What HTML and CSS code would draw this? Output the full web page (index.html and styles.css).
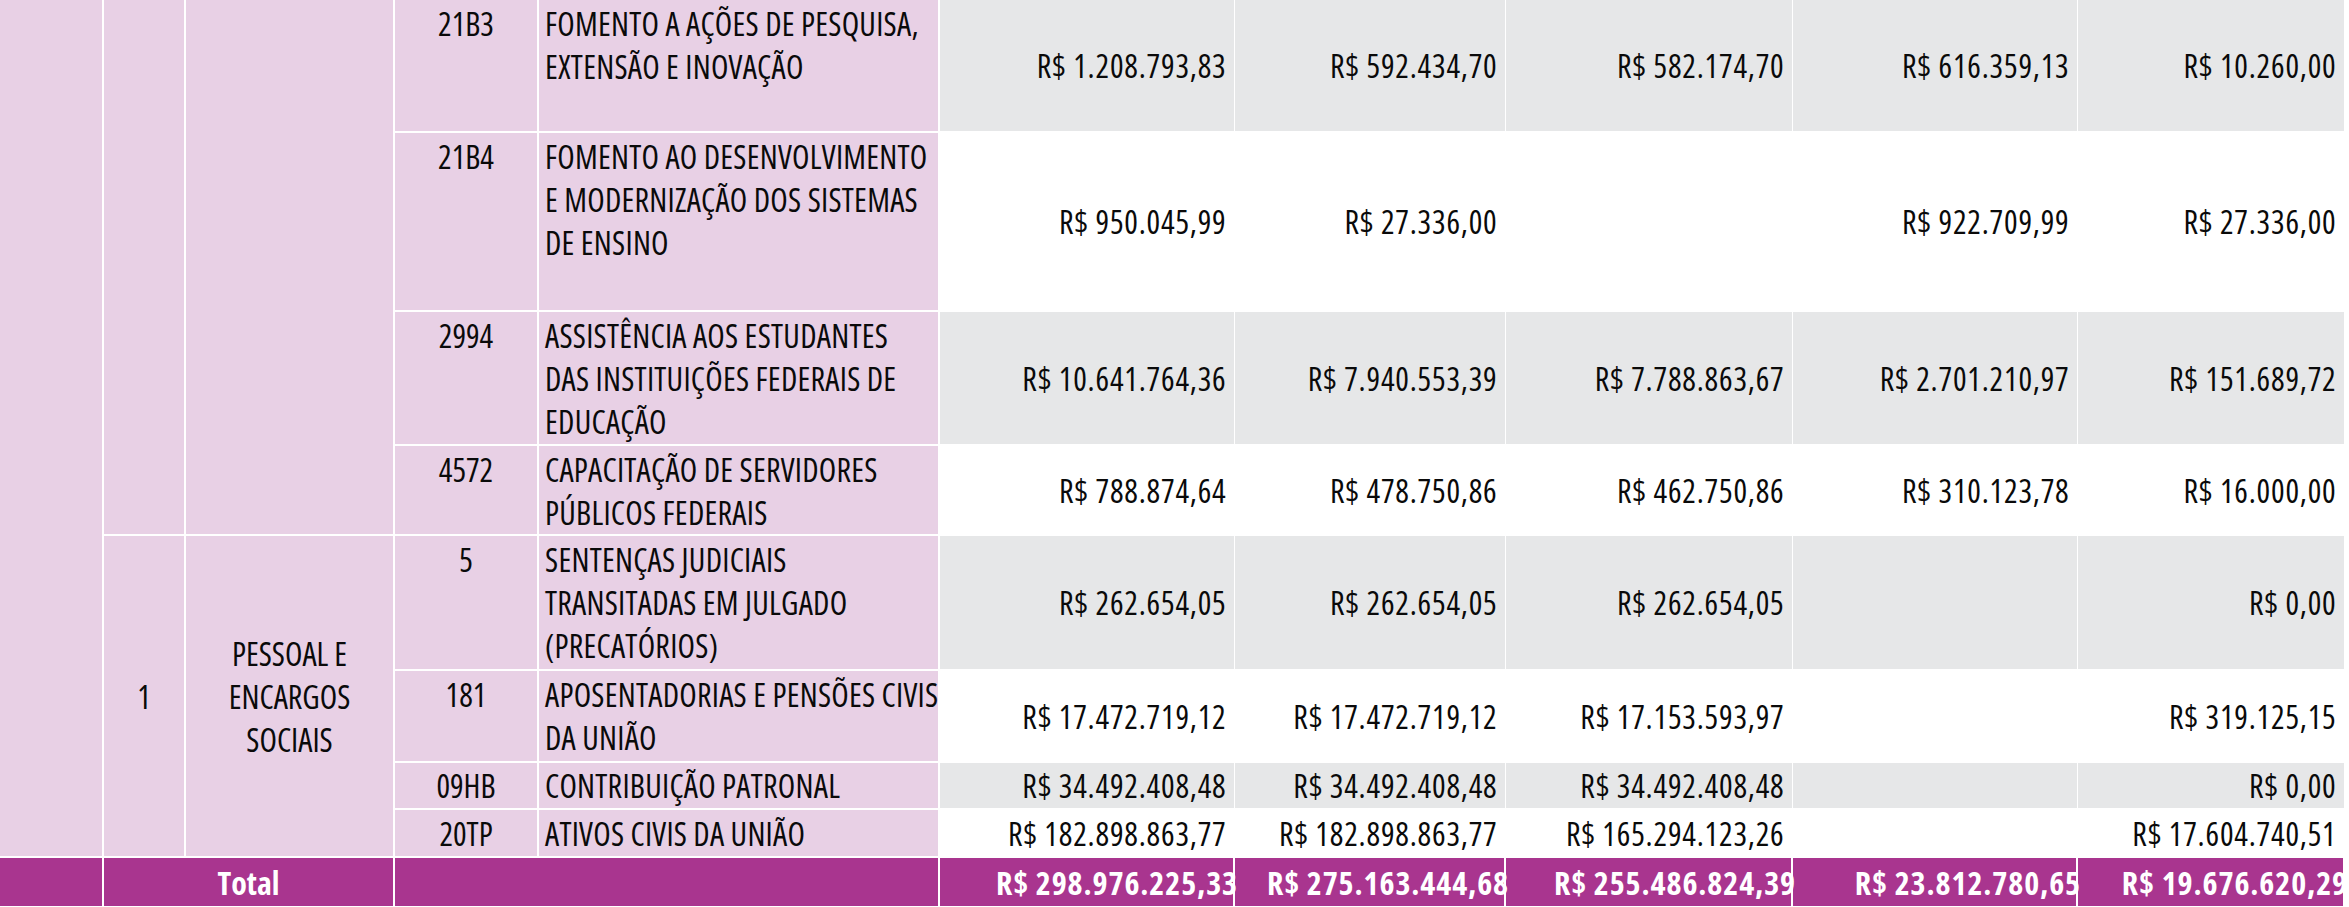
FILE: index.html
```html
<!DOCTYPE html>
<html lang="pt-BR">
<head>
<meta charset="utf-8">
<title>Execução orçamentária</title>
<link rel="stylesheet" href="styles.css">
</head>
<body>
<div class="sheet">
<table class="budget">
  <colgroup>
    <col class="c-grp">
    <col class="c-nat">
    <col class="c-natname">
    <col class="c-code">
    <col class="c-desc">
    <col class="c-v1">
    <col class="c-v2">
    <col class="c-v3">
    <col class="c-v4">
    <col class="c-v5">
  </colgroup>
  <tbody>
    <tr class="r1 shade">
      <td class="pink" rowspan="8"></td>
      <td class="pink" rowspan="4"></td>
      <td class="pink" rowspan="4"></td>
      <td class="pink code">21B3</td>
      <td class="pink desc">FOMENTO A AÇÕES DE PESQUISA,<br>EXTENSÃO E INOVAÇÃO</td>
      <td class="val">R$ 1.208.793,83</td>
      <td class="val">R$ 592.434,70</td>
      <td class="val">R$ 582.174,70</td>
      <td class="val">R$ 616.359,13</td>
      <td class="val">R$ 10.260,00</td>
    </tr>
    <tr class="r2">
      <td class="pink code">21B4</td>
      <td class="pink desc">FOMENTO AO DESENVOLVIMENTO<br>E MODERNIZAÇÃO DOS SISTEMAS<br>DE ENSINO</td>
      <td class="val">R$ 950.045,99</td>
      <td class="val">R$ 27.336,00</td>
      <td class="val"></td>
      <td class="val">R$ 922.709,99</td>
      <td class="val">R$ 27.336,00</td>
    </tr>
    <tr class="r3 shade">
      <td class="pink code">2994</td>
      <td class="pink desc">ASSISTÊNCIA AOS ESTUDANTES<br>DAS INSTITUIÇÕES FEDERAIS DE<br>EDUCAÇÃO</td>
      <td class="val">R$ 10.641.764,36</td>
      <td class="val">R$ 7.940.553,39</td>
      <td class="val">R$ 7.788.863,67</td>
      <td class="val">R$ 2.701.210,97</td>
      <td class="val">R$ 151.689,72</td>
    </tr>
    <tr class="r4">
      <td class="pink code">4572</td>
      <td class="pink desc">CAPACITAÇÃO DE SERVIDORES<br>PÚBLICOS FEDERAIS</td>
      <td class="val">R$ 788.874,64</td>
      <td class="val">R$ 478.750,86</td>
      <td class="val">R$ 462.750,86</td>
      <td class="val">R$ 310.123,78</td>
      <td class="val">R$ 16.000,00</td>
    </tr>
    <tr class="r5 shade">
      <td class="pink group" rowspan="4">1</td>
      <td class="pink group" rowspan="4">PESSOAL E<br>ENCARGOS<br>SOCIAIS</td>
      <td class="pink code">5</td>
      <td class="pink desc">SENTENÇAS JUDICIAIS<br>TRANSITADAS EM JULGADO<br>(PRECATÓRIOS)</td>
      <td class="val">R$ 262.654,05</td>
      <td class="val">R$ 262.654,05</td>
      <td class="val">R$ 262.654,05</td>
      <td class="val"></td>
      <td class="val">R$ 0,00</td>
    </tr>
    <tr class="r6">
      <td class="pink code">181</td>
      <td class="pink desc">APOSENTADORIAS E PENSÕES CIVIS<br>DA UNIÃO</td>
      <td class="val">R$ 17.472.719,12</td>
      <td class="val">R$ 17.472.719,12</td>
      <td class="val">R$ 17.153.593,97</td>
      <td class="val"></td>
      <td class="val">R$ 319.125,15</td>
    </tr>
    <tr class="r7 shade single">
      <td class="pink code">09HB</td>
      <td class="pink desc">CONTRIBUIÇÃO PATRONAL</td>
      <td class="val">R$ 34.492.408,48</td>
      <td class="val">R$ 34.492.408,48</td>
      <td class="val">R$ 34.492.408,48</td>
      <td class="val"></td>
      <td class="val">R$ 0,00</td>
    </tr>
    <tr class="r8 single">
      <td class="pink code">20TP</td>
      <td class="pink desc">ATIVOS CIVIS DA UNIÃO</td>
      <td class="val">R$ 182.898.863,77</td>
      <td class="val">R$ 182.898.863,77</td>
      <td class="val">R$ 165.294.123,26</td>
      <td class="val"></td>
      <td class="val">R$ 17.604.740,51</td>
    </tr>
    <tr class="total">
      <td></td>
      <td class="total-label" colspan="2">Total</td>
      <td colspan="2"></td>
      <td class="tval"><span>R$ 298.976.225,33</span></td>
      <td class="tval"><span>R$ 275.163.444,68</span></td>
      <td class="tval"><span>R$ 255.486.824,39</span></td>
      <td class="tval"><span>R$ 23.812.780,65</span></td>
      <td class="tval last"><span>R$ 19.676.620,29</span></td>
    </tr>
  </tbody>
</table>
</div>
</body>
</html>
```

FILE: styles.css
```css
html, body {
  margin: 0;
  padding: 0;
  background: #ffffff;
}

.sheet {
  width: 2344px;
  overflow: hidden;
}

.budget {
  width: 2344px;
  table-layout: fixed;
  border-collapse: collapse;
  font-family: "Open Sans", "Liberation Sans", sans-serif;
  font-stretch: 75%;
  font-size: 32px;
  line-height: 43px;
  color: #0a0a0a;
}

.c-grp { width: 103px; }
.c-nat { width: 82px; }
.c-natname { width: 209px; }
.c-code { width: 144px; }
.c-desc { width: 401px; }
.c-v1 { width: 295px; }
.c-v2 { width: 271px; }
.c-v3 { width: 287px; }
.c-v4 { width: 285px; }
.c-v5 { width: 267px; }

.budget td {
  border: 2px solid #ffffff;
  padding: 0;
  white-space: nowrap;
  overflow: hidden;
}

.r1 td { height: 129px; }
.r2 td { height: 175px; }
.r3 td { height: 130px; }
.r4 td { height: 86px; }
.r5 td { height: 131px; }
.r6 td { height: 88px; }
.r7 td { height: 45px; }
.r8 td { height: 46px; }
.total td { height: 48px; }

.budget tr:first-child td { border-top: 0; }
.budget tr td:first-child { border-left: 0; }

.budget .pink {
  background: #e8d0e5;
}

.budget .code {
  text-align: center;
  vertical-align: top;
  padding-top: 2px;
}

.budget .desc {
  text-align: left;
  vertical-align: top;
  padding: 2px 0 0 6px;
  letter-spacing: 0.25px;
}

.budget .single .code,
.budget .single .desc {
  padding-top: 0;
  vertical-align: middle;
}

.budget .group {
  text-align: center;
  vertical-align: middle;
  line-height: 43px;
}

.budget .val {
  text-align: right;
  vertical-align: middle;
  padding-right: 7px;
  letter-spacing: 0.8px;
  background: #ffffff;
  border-left-width: 1px;
  border-right-width: 1px;
}

.budget .shade .val {
  background: #e6e7e8;
}

.budget .total td {
  background: #a9358f;
  color: #ffffff;
  font-weight: 700;
  border-top: 2px solid #d7a6cb;
  border-bottom: 0;
  vertical-align: middle;
}

.budget .total-label {
  text-align: center;
}

.budget .total .tval {
  text-align: right;
  overflow: visible;
  letter-spacing: 0.9px;
}

.tval span {
  display: inline-block;
  margin-right: -5px;
}

.budget .total .tval.last {
  overflow: hidden;
}
```
